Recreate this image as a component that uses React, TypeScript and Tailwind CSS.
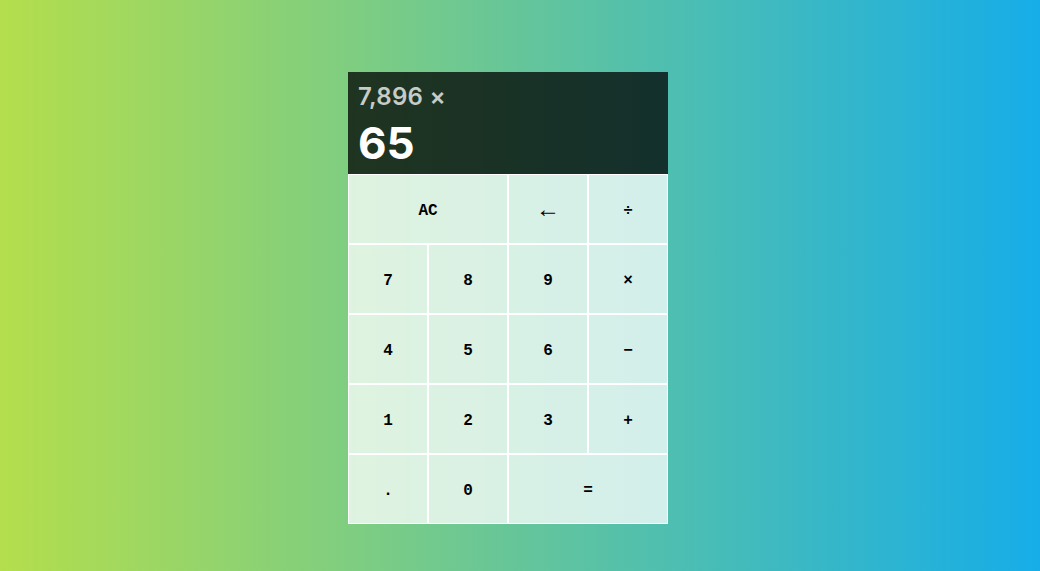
import React from "react";

const btn =
  "flex items-center justify-center border border-white bg-white/75 text-black font-bold text-[16px] pt-[3px]";

export default function App() {
  return (
    <div
      className="min-h-screen w-full bg-[linear-gradient(to_right,#b4de4c,#16ade8)] pl-[348px] pt-[72px]"
      style={{ fontFamily: '"Liberation Mono", monospace' }}
    >
      <div className="w-[320px] grid grid-cols-4 grid-rows-[102px_repeat(5,70px)]">
        <div
          className="col-span-4 bg-black/75 flex flex-col justify-start px-[10px] pt-[10px]"
          style={{ fontFamily: "Inter, sans-serif" }}
        >
          <div className="text-white/75 text-[24px] leading-[30px] font-semibold tracking-[0.01em]">7,896 ×</div>
          <div className="text-white text-[44px] leading-[48px] font-bold mt-[7px]">65</div>
        </div>
        <button className={`${btn} col-span-2`}>AC</button>
        <button className={`${btn} text-[24px] font-normal`}>←</button>
        <button className={btn}>÷</button>
        <button className={btn}>7</button>
        <button className={btn}>8</button>
        <button className={btn}>9</button>
        <button className={btn}>×</button>
        <button className={btn}>4</button>
        <button className={btn}>5</button>
        <button className={btn}>6</button>
        <button className={btn}>−</button>
        <button className={btn}>1</button>
        <button className={btn}>2</button>
        <button className={btn}>3</button>
        <button className={btn}>+</button>
        <button className={btn}>.</button>
        <button className={btn}>0</button>
        <button className={`${btn} col-span-2`}>=</button>
      </div>
    </div>
  );
}
